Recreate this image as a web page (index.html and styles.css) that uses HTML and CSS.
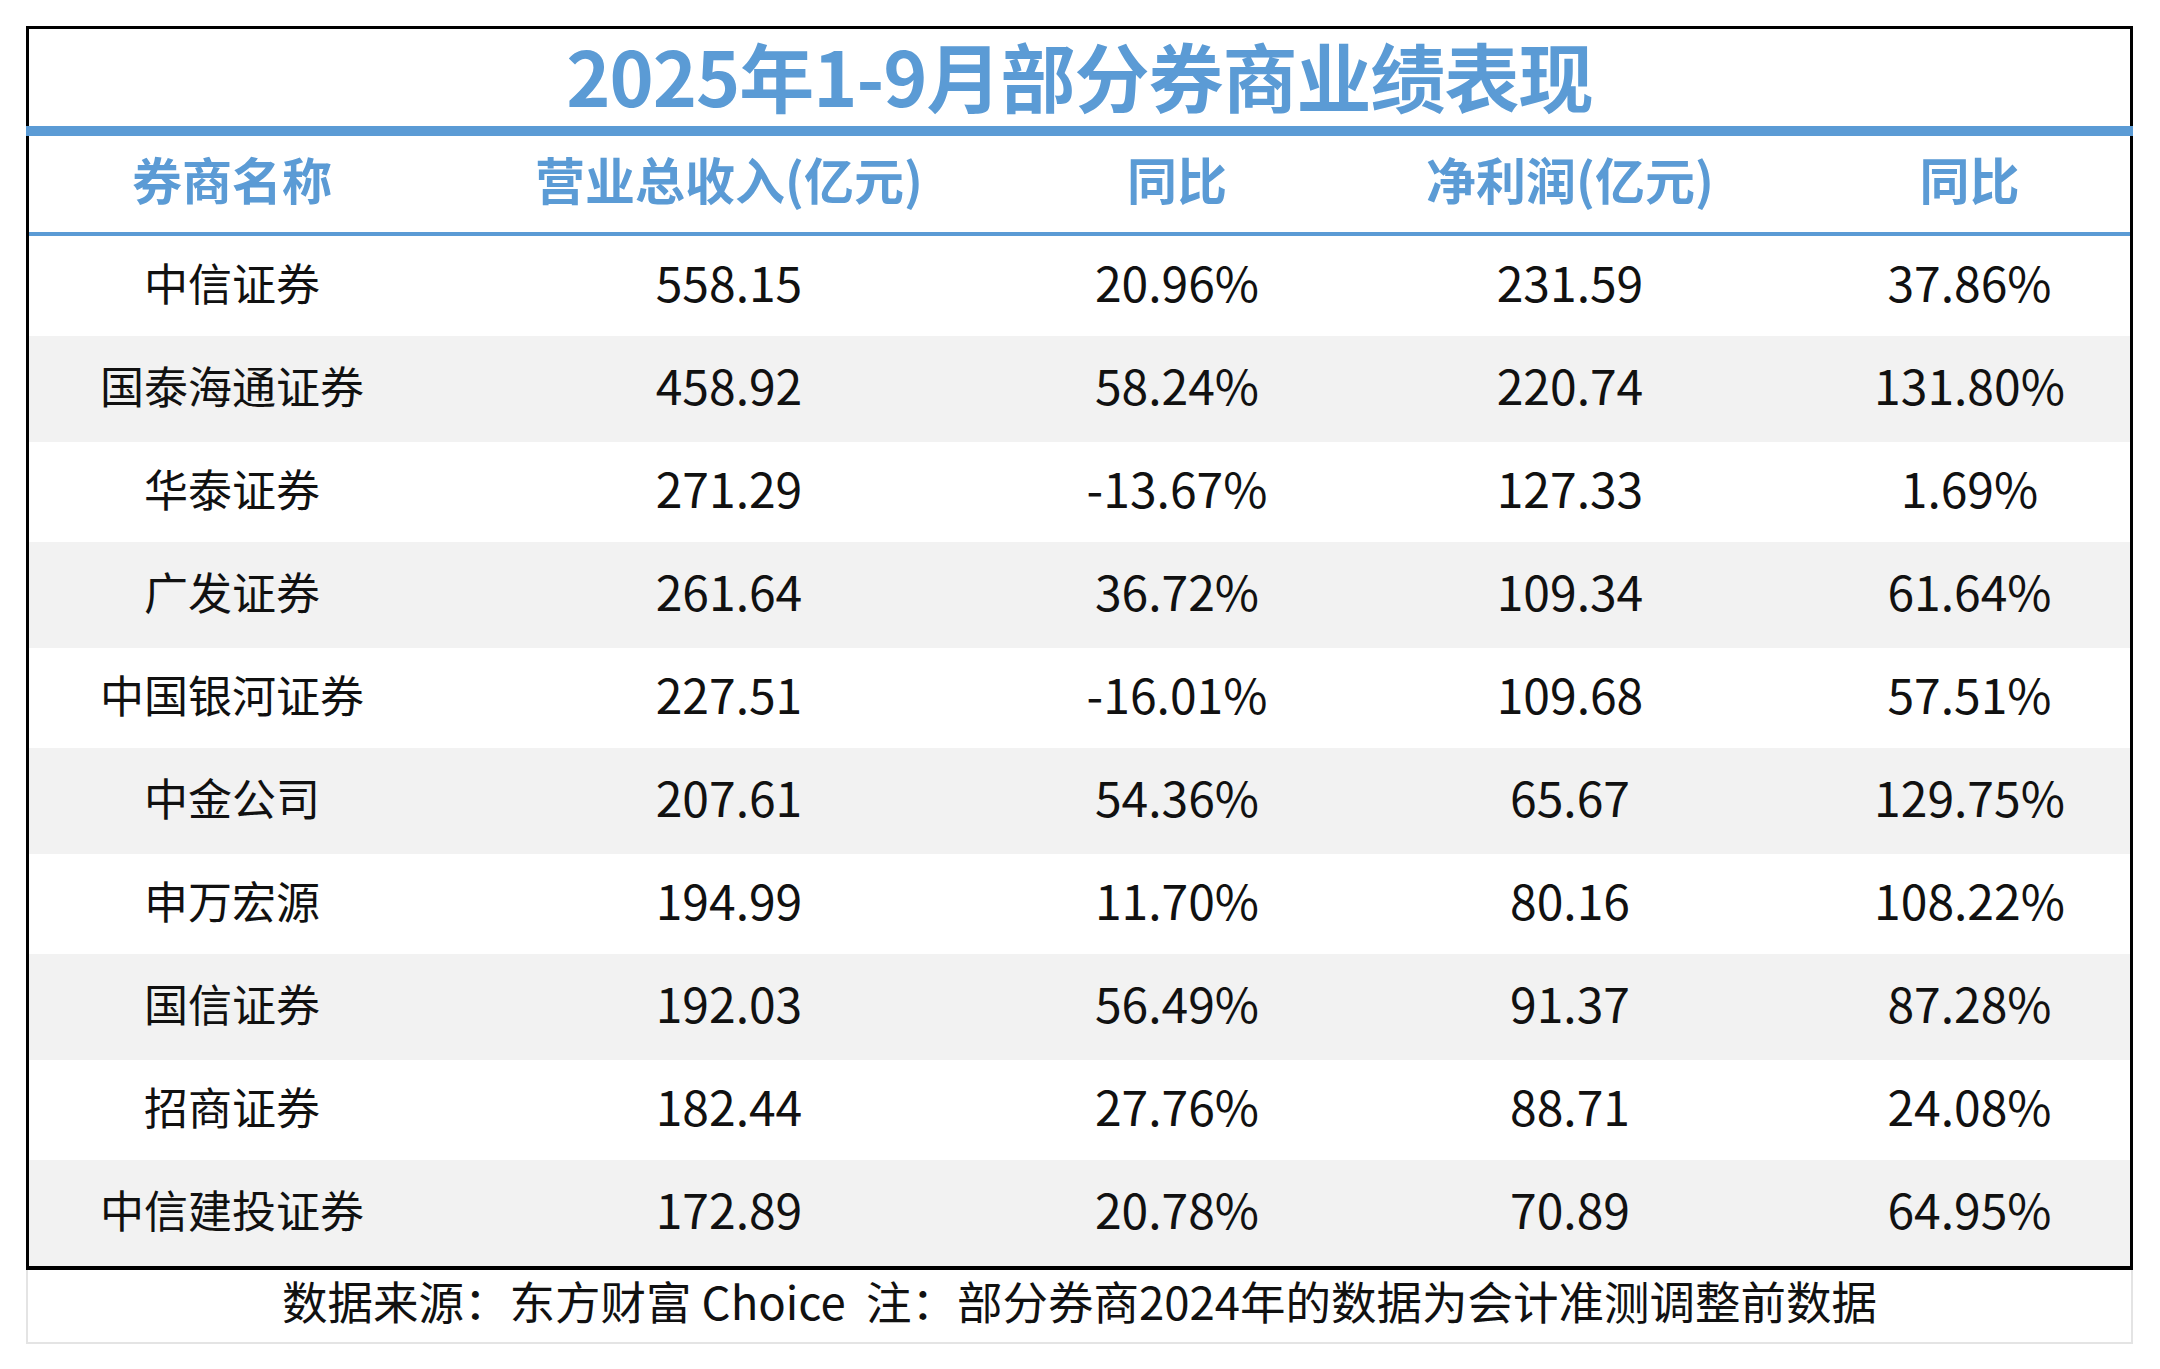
FILE: index.html
```html
<!DOCTYPE html>
<html lang="zh-CN">
<head>
<meta charset="utf-8">
<title>2025年1-9月部分券商业绩表现</title>
<link rel="stylesheet" href="styles.css">
</head>
<body>
<div class="sheet">
  <div class="title-box"><h1 class="title">2025年1-9月部分券商业绩表现</h1></div>
  <div class="bar"></div>
  <div class="table">
    <div class="row head">
      <div class="cell">券商名称</div>
      <div class="cell">营业总收入(亿元)</div>
      <div class="cell">同比</div>
      <div class="cell">净利润(亿元)</div>
      <div class="cell">同比</div>
    </div>
    <div class="row odd">
      <div class="cell name">中信证券</div>
      <div class="cell num">558.15</div>
      <div class="cell num">20.96%</div>
      <div class="cell num">231.59</div>
      <div class="cell num">37.86%</div>
    </div>
    <div class="row even">
      <div class="cell name">国泰海通证券</div>
      <div class="cell num">458.92</div>
      <div class="cell num">58.24%</div>
      <div class="cell num">220.74</div>
      <div class="cell num">131.80%</div>
    </div>
    <div class="row odd">
      <div class="cell name">华泰证券</div>
      <div class="cell num">271.29</div>
      <div class="cell num">-13.67%</div>
      <div class="cell num">127.33</div>
      <div class="cell num">1.69%</div>
    </div>
    <div class="row even">
      <div class="cell name">广发证券</div>
      <div class="cell num">261.64</div>
      <div class="cell num">36.72%</div>
      <div class="cell num">109.34</div>
      <div class="cell num">61.64%</div>
    </div>
    <div class="row odd">
      <div class="cell name">中国银河证券</div>
      <div class="cell num">227.51</div>
      <div class="cell num">-16.01%</div>
      <div class="cell num">109.68</div>
      <div class="cell num">57.51%</div>
    </div>
    <div class="row even">
      <div class="cell name">中金公司</div>
      <div class="cell num">207.61</div>
      <div class="cell num">54.36%</div>
      <div class="cell num">65.67</div>
      <div class="cell num">129.75%</div>
    </div>
    <div class="row odd">
      <div class="cell name">申万宏源</div>
      <div class="cell num">194.99</div>
      <div class="cell num">11.70%</div>
      <div class="cell num">80.16</div>
      <div class="cell num">108.22%</div>
    </div>
    <div class="row even">
      <div class="cell name">国信证券</div>
      <div class="cell num">192.03</div>
      <div class="cell num">56.49%</div>
      <div class="cell num">91.37</div>
      <div class="cell num">87.28%</div>
    </div>
    <div class="row odd">
      <div class="cell name">招商证券</div>
      <div class="cell num">182.44</div>
      <div class="cell num">27.76%</div>
      <div class="cell num">88.71</div>
      <div class="cell num">24.08%</div>
    </div>
    <div class="row even">
      <div class="cell name">中信建投证券</div>
      <div class="cell num">172.89</div>
      <div class="cell num">20.78%</div>
      <div class="cell num">70.89</div>
      <div class="cell num">64.95%</div>
    </div>
  </div>
  <div class="footer">数据来源：东方财富 Choice&nbsp; 注：部分券商2024年的数据为会计准测调整前数据</div>
</div>
</body>
</html>
```
FILE: styles.css
```css
* { box-sizing: border-box; }
html, body {
  margin: 0;
  padding: 0;
  background: #ffffff;
}
body {
  font-family: "Noto Sans CJK SC", "Noto Sans", sans-serif;
  color: #111111;
}
.sheet {
  width: 2107px;
  margin: 26px 0 0 26px;
  display: flex;
  flex-direction: column;
}
.title-box {
  height: 100px;
  border: 3px solid #000;
  border-bottom: none;
  display: flex;
  align-items: center;
  justify-content: center;
  padding-bottom: 6px;
}
.title {
  margin: 0;
  font-size: 75px;
  font-weight: 700;
  line-height: 1;
  color: #5b9bd5;
  letter-spacing: -1px;
}
.bar {
  height: 10px;
  background: #5b9bd5;
}
.table {
  border-left: 3px solid #000;
  border-right: 3px solid #000;
  border-bottom: 4px solid #000;
}
.row {
  display: grid;
  grid-template-columns: 406px 588px 308px 478px 321px;
}
.cell {
  display: flex;
  align-items: center;
  justify-content: center;
  line-height: 1;
  white-space: nowrap;
  padding-bottom: 8px;
}
.head {
  height: 100px;
  border-bottom: 4px solid #5b9bd5;
}
.head .cell {
  font-size: 50px;
  font-weight: 700;
  color: #5b9bd5;
  padding-bottom: 12px;
}
.odd { height: 100px; background: #ffffff; }
.even { height: 106px; background: #f2f2f2; }
.name { font-size: 44px; }
.num { font-size: 48px; padding-bottom: 10px; }
.footer {
  height: 74px;
  border: 2px solid #e4e4e4;
  border-top: none;
  display: flex;
  align-items: center;
  justify-content: center;
  font-size: 45.5px;
  line-height: 1;
  color: #111111;
  white-space: nowrap;
  padding-bottom: 10px;
}
```
